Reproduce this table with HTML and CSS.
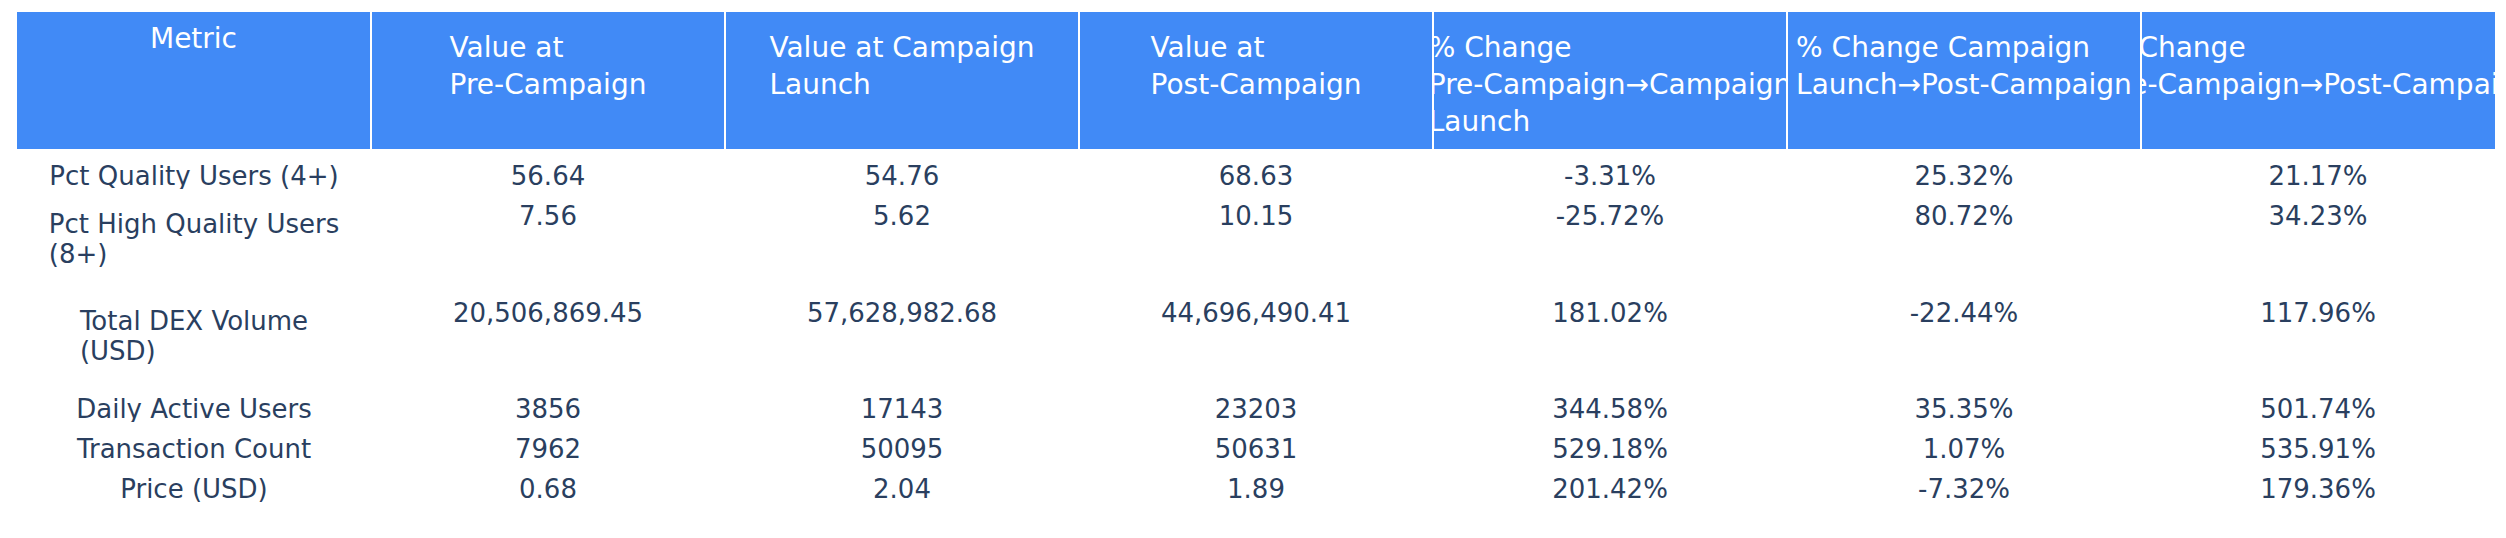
FILE: index.html
```html
<!DOCTYPE html>
<html>
<head>
<meta charset="utf-8">
<link rel="stylesheet" href="styles.css">
</head>
<body>
<div class="table">
  <div class="hcell"><div class="txt">Metric</div></div>
  <div class="hcell"><div class="txt ml">Value at<br>Pre-Campaign</div></div>
  <div class="hcell"><div class="txt ml">Value at Campaign<br>Launch</div></div>
  <div class="hcell"><div class="txt ml">Value at<br>Post-Campaign</div></div>
  <div class="hcell"><div class="txt ml">% Change<br>Pre-Campaign→Campaign<br>Launch</div></div>
  <div class="hcell"><div class="txt ml">% Change Campaign<br>Launch→Post-Campaign</div></div>
  <div class="hcell"><div class="txt ml">% Change<br>Pre-Campaign→Post-Campaign</div></div>

  <div class="cell"><div class="txt">Pct Quality Users (4+)</div></div>
  <div class="cell"><div class="txt">56.64</div></div>
  <div class="cell"><div class="txt">54.76</div></div>
  <div class="cell"><div class="txt">68.63</div></div>
  <div class="cell"><div class="txt">-3.31%</div></div>
  <div class="cell"><div class="txt">25.32%</div></div>
  <div class="cell"><div class="txt">21.17%</div></div>

  <div class="cell"><div class="txt ml">Pct High Quality Users<br>(8+)</div></div>
  <div class="cell"><div class="txt">7.56</div></div>
  <div class="cell"><div class="txt">5.62</div></div>
  <div class="cell"><div class="txt">10.15</div></div>
  <div class="cell"><div class="txt">-25.72%</div></div>
  <div class="cell"><div class="txt">80.72%</div></div>
  <div class="cell"><div class="txt">34.23%</div></div>

  <div class="cell"><div class="txt ml">Total DEX Volume<br>(USD)</div></div>
  <div class="cell"><div class="txt">20,506,869.45</div></div>
  <div class="cell"><div class="txt">57,628,982.68</div></div>
  <div class="cell"><div class="txt">44,696,490.41</div></div>
  <div class="cell"><div class="txt">181.02%</div></div>
  <div class="cell"><div class="txt">-22.44%</div></div>
  <div class="cell"><div class="txt">117.96%</div></div>

  <div class="cell"><div class="txt">Daily Active Users</div></div>
  <div class="cell"><div class="txt">3856</div></div>
  <div class="cell"><div class="txt">17143</div></div>
  <div class="cell"><div class="txt">23203</div></div>
  <div class="cell"><div class="txt">344.58%</div></div>
  <div class="cell"><div class="txt">35.35%</div></div>
  <div class="cell"><div class="txt">501.74%</div></div>

  <div class="cell"><div class="txt">Transaction Count</div></div>
  <div class="cell"><div class="txt">7962</div></div>
  <div class="cell"><div class="txt">50095</div></div>
  <div class="cell"><div class="txt">50631</div></div>
  <div class="cell"><div class="txt">529.18%</div></div>
  <div class="cell"><div class="txt">1.07%</div></div>
  <div class="cell"><div class="txt">535.91%</div></div>

  <div class="cell"><div class="txt">Price (USD)</div></div>
  <div class="cell"><div class="txt">0.68</div></div>
  <div class="cell"><div class="txt">2.04</div></div>
  <div class="cell"><div class="txt">1.89</div></div>
  <div class="cell"><div class="txt">201.42%</div></div>
  <div class="cell"><div class="txt">-7.32%</div></div>
  <div class="cell"><div class="txt">179.36%</div></div>
</div>
</body>
</html>
```
FILE: styles.css
```css
html, body {
  margin: 0;
  padding: 0;
  background: #ffffff;
}

body {
  width: 2506px;
  height: 538px;
  overflow: hidden;
  font-family: "DejaVu Sans", Verdana, sans-serif;
}

.table {
  display: grid;
  grid-template-columns: repeat(7, 354px);
  grid-template-rows: 137px 40px 97px 96px 40px 40px 40px;
  margin: 12px 0 0 17px;
  width: 2478px;
}

.hcell {
  background: #418af6;
  border-left: 1px solid #ffffff;
  border-right: 1px solid #ffffff;
  box-sizing: border-box;
  display: flex;
  justify-content: center;
  align-items: flex-start;
  overflow: hidden;
  color: #ffffff;
  font-size: 28px;
  line-height: 37px;
  padding-top: 8px;
}

.hcell:first-child {
  border-left: none;
}

.hcell:nth-child(7) {
  border-right: none;
}

.hcell .txt.ml {
  margin-top: 9px;
}

.cell {
  display: flex;
  justify-content: center;
  align-items: flex-start;
  overflow: hidden;
  color: #2a3f5f;
  font-size: 26px;
  line-height: 30px;
  padding-top: 12px;
  box-sizing: border-box;
}

.cell .txt.ml {
  margin-top: 8px;
}

.txt {
  white-space: nowrap;
  text-align: left;
  flex: none;
}
```
